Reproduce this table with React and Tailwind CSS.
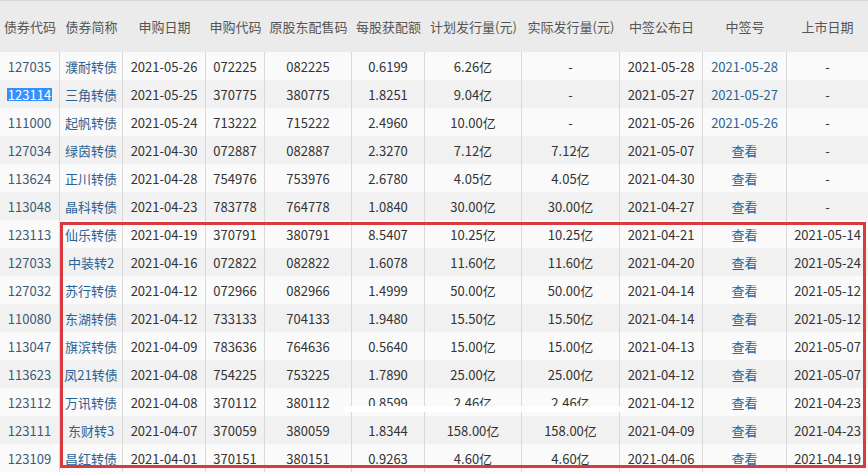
const rows = [
  ['127035', '濮耐转债', '2021-05-26', '072225', '082225', '0.6199', '6.26亿', '-', '2021-05-28', '2021-05-28', '-'],
  ['123114', '三角转债', '2021-05-25', '370775', '380775', '1.8251', '9.04亿', '-', '2021-05-27', '2021-05-27', '-'],
  ['111000', '起帆转债', '2021-05-24', '713222', '715222', '2.4960', '10.00亿', '-', '2021-05-26', '2021-05-26', '-'],
  ['127034', '绿茵转债', '2021-04-30', '072887', '082887', '2.3270', '7.12亿', '7.12亿', '2021-05-07', '查看', '-'],
  ['113624', '正川转债', '2021-04-28', '754976', '753976', '2.6780', '4.05亿', '4.05亿', '2021-04-30', '查看', '-'],
  ['113048', '晶科转债', '2021-04-23', '783778', '764778', '1.0840', '30.00亿', '30.00亿', '2021-04-27', '查看', '-'],
  ['123113', '仙乐转债', '2021-04-19', '370791', '380791', '8.5407', '10.25亿', '10.25亿', '2021-04-21', '查看', '2021-05-14'],
  ['127033', '中装转2', '2021-04-16', '072822', '082822', '1.6078', '11.60亿', '11.60亿', '2021-04-20', '查看', '2021-05-24'],
  ['127032', '苏行转债', '2021-04-12', '072966', '082966', '1.4999', '50.00亿', '50.00亿', '2021-04-14', '查看', '2021-05-12'],
  ['110080', '东湖转债', '2021-04-12', '733133', '704133', '1.9480', '15.50亿', '15.50亿', '2021-04-14', '查看', '2021-05-12'],
  ['113047', '旗滨转债', '2021-04-09', '783636', '764636', '0.5640', '15.00亿', '15.00亿', '2021-04-13', '查看', '2021-05-07'],
  ['113623', '凤21转债', '2021-04-08', '754225', '753225', '1.7890', '25.00亿', '25.00亿', '2021-04-12', '查看', '2021-05-07'],
  ['123112', '万讯转债', '2021-04-08', '370112', '380112', '0.8599', '2.46亿', '2.46亿', '2021-04-12', '查看', '2021-04-23'],
  ['123111', '东财转3', '2021-04-07', '370059', '380059', '1.8344', '158.00亿', '158.00亿', '2021-04-09', '查看', '2021-04-23'],
  ['123109', '昌红转债', '2021-04-01', '370151', '380151', '0.9263', '4.60亿', '4.60亿', '2021-04-06', '查看', '2021-04-19'],
]

const heads = ['债券代码', '债券简称', '申购日期', '申购代码', '原股东配售码', '每股获配额', '计划发行量(元)', '实际发行量(元)', '中签公布日', '中签号', '上市日期']

const cols = 'grid grid-cols-[60px_63px_83px_59px_87px_73px_97px_98px_83px_84px_81px]'

function cellColor(ci, v) {
  if (ci === 0) return 'text-[#3b5a78]'
  if (ci === 1) return 'text-[#2a6496]'
  if (ci === 9) return 'text-[#2a6496]'
  return 'text-[#333]'
}

export default function App() {
  return (
    <div className="relative w-[868px] h-[472px] overflow-hidden bg-white text-[13px] leading-none" style={{ fontFamily: '"Noto Sans CJK SC", "Microsoft YaHei", sans-serif' }}>
      <div className={`${cols} h-[52px] bg-[#ebebeb] border-t border-[#d6d6d6] text-[#555]`}>
        {heads.map((h) => (
          <div key={h} className="flex items-center justify-center whitespace-nowrap">{h}</div>
        ))}
      </div>

      {rows.map((r, i) => (
        <div key={r[0]} className={`${cols} h-[28px] ${i % 2 === 0 ? 'bg-[#fafafa]' : 'bg-[#f1f1f1]'}`}>
          {r.map((v, ci) => (
            <div key={ci} className={`flex items-center justify-center whitespace-nowrap ${ci < 10 ? 'border-r border-[#d9d9d9]' : ''} ${cellColor(ci, v)}`}>
              {i === 1 && ci === 0
                ? <span className="bg-[#3390ff] text-white px-px">{v}</span>
                : v}
            </div>
          ))}
        </div>
      ))}

      {/* red highlight box */}
      <div className="absolute left-[60px] top-[222px] w-[806px] h-[246px] border-[3px] border-[#d93a40] pointer-events-none" />

      {/* white strip across 万讯 row */}
      <div className="absolute left-[343px] top-[406px] w-[282px] h-[6px] bg-white" />
    </div>
  )
}
